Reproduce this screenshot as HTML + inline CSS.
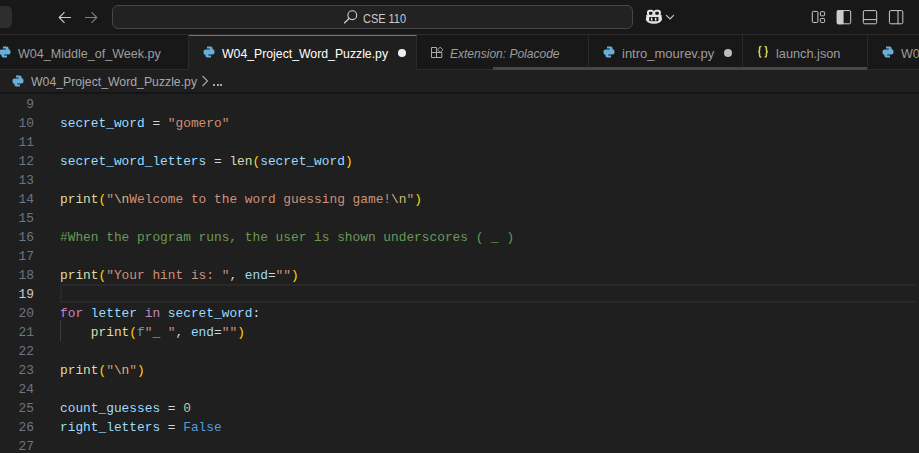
<!DOCTYPE html>
<html><head><meta charset="utf-8">
<style>
*{margin:0;padding:0;box-sizing:border-box}
html,body{width:919px;height:453px;overflow:hidden;background:#1f1f1f}
body{position:relative;font-family:"Liberation Sans",sans-serif;color:#ccc}
.abs{position:absolute}
#title{left:0;top:0;width:919px;height:35px;background:#181818;border-bottom:1px solid #2b2b2b}
#tabs{left:0;top:35px;width:919px;height:35px;background:#181818}
#crumbs{left:0;top:70px;width:919px;height:22px;background:#1f1f1f}
.tab{position:absolute;top:0;height:35px;background:#181818;border-right:1px solid #2b2b2b;border-bottom:1px solid #2b2b2b}
.tab.active{background:#1f1f1f;border-bottom:none}
.lbl{position:absolute;font-size:13px;line-height:16px;white-space:nowrap;color:#9d9d9d;transform-origin:0 0}
.tab.active .lbl{color:#ffffff}
.code{font-family:"Liberation Mono",monospace;font-size:12.83px;white-space:pre}
.ln{position:absolute;left:0;width:34px;text-align:right;color:#6e7681;height:19px;line-height:19px}
.cl{position:absolute;left:60px;height:19px;line-height:19px;color:#d4d4d4}
.v{color:#9cdcfe}.s{color:#ce9178}.f{color:#dcdcaa}.b{color:#ffd700}.k{color:#c586c0}.c{color:#6a9955}.n{color:#b5cea8}.t{color:#569cd6}.e{color:#d7ba7d}
</style></head><body>
<svg width="0" height="0" style="position:absolute">
 <defs>
  <g id="py" fill="#68aedb">
   <path d="M4 0.6h3.6a2 2 0 0 1 2 2v2.2a1.2 1.2 0 0 1-1.2 1.2H5.2a1.3 1.3 0 0 0-1.3 1.3v1.5H2.4A2 2 0 0 1 0.5 6.8V5.4A2 2 0 0 1 2.5 3.4h4.3V2.6H4z"/>
   <path d="M8 11.4H4.4a2 2 0 0 1-2-2V7.2a1.2 1.2 0 0 1 1.2-1.2h3.2a1.3 1.3 0 0 0 1.3-1.3V3.2h1.5a2 2 0 0 1 1.9 2v1.4a2 2 0 0 1-2 2H5.2v0.8H8z"/>
  </g>
 </defs>
</svg>
<div id="title" class="abs">
  <div class="abs" style="left:-6px;top:6px;width:18px;height:22px;border-radius:5px;background:#2e2e2e"></div>
  <svg class="abs" style="left:57px;top:10px" width="16" height="16" viewBox="0 0 16 16"><path d="M2.8 7.5h11.2M7.5 2.2L2.2 7.5l5.3 5.3" fill="none" stroke="#cccccc" stroke-width="1.1"/></svg>
  <svg class="abs" style="left:83px;top:10px" width="16" height="16" viewBox="0 0 16 16"><path d="M2 7.5h11.2M8.5 2.2l5.3 5.3-5.3 5.3" fill="none" stroke="#808080" stroke-width="1.1"/></svg>
  <div class="abs" style="left:112px;top:5px;width:521px;height:24px;border-radius:6px;border:1px solid #464646;background:#222222"></div>
  <svg class="abs" style="left:343px;top:9px" width="16" height="16" viewBox="0 0 16 16"><circle cx="9.3" cy="6.2" r="4.4" fill="none" stroke="#cccccc" stroke-width="1.1"/><path d="M6.2 9.3L1.2 14.3" stroke="#cccccc" stroke-width="1.3"/></svg>
  <div class="lbl" style="left:363px;top:11px;transform:scaleX(0.913);font-size:12px;color:#cccccc">CSE 110</div>
  <svg class="abs" style="left:644px;top:8px" width="20" height="18" viewBox="644 8 20 18"><ellipse cx="653.9" cy="19.3" rx="8" ry="4.5" fill="#e6e6e6"/><rect x="646.2" y="15" width="15.4" height="4" fill="#e6e6e6"/><rect x="647.0" y="9.8" width="7.0" height="6.2" rx="2.8" fill="#e6e6e6"/><rect x="653.7" y="9.8" width="7.2" height="6.2" rx="2.8" fill="#e6e6e6"/><rect x="649.0" y="11.8" width="3.4" height="3.0" rx="0.8" fill="#181818"/><rect x="655.3" y="11.8" width="3.5" height="3.0" rx="0.8" fill="#181818"/><rect x="649.2" y="16.9" width="9.3" height="4.4" rx="0.8" fill="#181818"/><rect x="650.9" y="17.7" width="1.5" height="2.9" fill="#e6e6e6"/><rect x="654.9" y="17.7" width="1.5" height="2.9" fill="#e6e6e6"/></svg>
  <svg class="abs" style="left:665px;top:13px" width="10" height="8" viewBox="0 0 10 8"><path d="M1.2 2.2L5 6 8.8 2.2" fill="none" stroke="#cccccc" stroke-width="1.1"/></svg>
  <svg class="abs" style="left:811px;top:10px" width="16" height="14" viewBox="0 0 16 14"><rect x="1.3" y="1.4" width="5.6" height="11.1" rx="1.1" fill="none" stroke="#cccccc" stroke-width="1"/><rect x="9.4" y="1.7" width="4.2" height="4.1" rx="0.9" fill="none" stroke="#cccccc" stroke-width="1"/><rect x="9.4" y="8.5" width="4.2" height="4.0" rx="0.9" fill="none" stroke="#cccccc" stroke-width="1"/></svg>
  <svg class="abs" style="left:836px;top:10px" width="16" height="15" viewBox="0 0 16 15"><rect x="1.2" y="0.6" width="13.5" height="13.2" rx="1.4" fill="none" stroke="#cccccc" stroke-width="1"/><rect x="0.8" y="0.2" width="6.8" height="14" rx="1.2" fill="#cccccc"/></svg>
  <svg class="abs" style="left:862px;top:10px" width="16" height="15" viewBox="0 0 16 15"><rect x="1.3" y="0.6" width="13.4" height="13.2" rx="1.4" fill="none" stroke="#cccccc" stroke-width="1"/><path d="M1.3 9.6h13.4" stroke="#cccccc" stroke-width="1"/></svg>
  <svg class="abs" style="left:888px;top:10px" width="16" height="15" viewBox="0 0 16 15"><rect x="1.4" y="0.6" width="13.4" height="13.2" rx="1.4" fill="none" stroke="#cccccc" stroke-width="1"/><path d="M10 0.6v13.2" stroke="#cccccc" stroke-width="1"/></svg>
</div>
<div id="tabs" class="abs">
  <div class="tab" style="left:0;width:189px"><svg class="abs" style="left:-1px;top:11px" width="12" height="12" viewBox="0 0 12 12"><use href="#py"/></svg><div class="lbl" style="left:18px;top:11px;transform:scaleX(0.966);">W04_Middle_of_Week.py</div></div>
  <div class="tab active" style="left:189px;width:228px;border-top:1px solid #3a80c8"><svg class="abs" style="left:14px;top:10px" width="12" height="12" viewBox="0 0 12 12"><use href="#py"/></svg><div class="lbl" style="left:33px;top:10px;transform:scaleX(0.943);">W04_Project_Word_Puzzle.py</div>
    <div class="abs" style="left:209px;top:13px;width:8px;height:8px;border-radius:50%;background:#f0f0f0"></div></div>
  <div class="tab" style="left:417px;width:172px">
    <svg class="abs" style="left:13px;top:11px" width="14" height="13" viewBox="0 0 14 13"><path d="M1.5 1.5h5v5h-5zM1.5 6.5h5v5h-5zM6.5 6.5h5.3v5H6.5z" fill="none" stroke="#ababab" stroke-width="1"/><path d="M10.2 1.1l2.7 2.7-2.7 2.7-2.7-2.7z" fill="none" stroke="#ababab" stroke-width="1"/></svg>
    <div class="lbl" style="left:33px;top:11px;transform:scaleX(0.924);font-style:italic">Extension: Polacode</div></div>
  <div class="tab" style="left:589px;width:154px"><svg class="abs" style="left:14px;top:11px" width="12" height="12" viewBox="0 0 12 12"><use href="#py"/></svg><div class="lbl" style="left:33px;top:11px;transform:scaleX(1.0);">intro_mourev.py</div>
    <div class="abs" style="left:135px;top:14px;width:8px;height:8px;border-radius:50%;background:#bdbdbd"></div></div>
  <div class="tab" style="left:743px;width:125px">
    <svg class="abs" style="left:13px;top:10px" width="14" height="14" viewBox="0 0 14 14"><path d="M5.4 1.4H4.9c-.9 0-1.3.5-1.3 1.3v2.4c0 .8-.4 1.4-1.3 1.6.9.2 1.3.8 1.3 1.6v2.5c0 .8.4 1.3 1.3 1.3h.5" fill="none" stroke="#d0d45c" stroke-width="1.5"/><path d="M8.6 1.4h.5c.9 0 1.3.5 1.3 1.3v2.4c0 .8.4 1.4 1.3 1.6-.9.2-1.3.8-1.3 1.6v2.5c0 .8-.4 1.3-1.3 1.3h-.5" fill="none" stroke="#d0d45c" stroke-width="1.5"/></svg>
    <div class="lbl" style="left:33px;top:11px;transform:scaleX(0.98);">launch.json</div></div>
  <div class="tab" style="left:868px;width:100px"><svg class="abs" style="left:14px;top:11px" width="12" height="12" viewBox="0 0 12 12"><use href="#py"/></svg><div class="lbl" style="left:33px;top:11px;transform:scaleX(0.966);">W04_Project_Word_Puzzle.py</div></div>
  <div class="abs" style="left:493px;top:32px;width:374px;height:3px;background:#474747"></div>
</div>
<div id="crumbs" class="abs">
  <svg class="abs" style="left:12px;top:5px" width="12" height="12" viewBox="0 0 12 12"><use href="#py"/></svg>
  <div class="lbl" style="left:31px;top:4px;transform:scaleX(0.943);color:#a9a9a9">W04_Project_Word_Puzzle.py</div>
  <svg class="abs" style="left:201px;top:5px" width="8" height="12" viewBox="0 0 8 12"><path d="M1.5 1l5 5-5 5" fill="none" stroke="#a9a9a9" stroke-width="1.1"/></svg>
  <div class="abs" style="left:213.2px;top:14.3px;width:2px;height:2px;background:#a8a8a8"></div>
  <div class="abs" style="left:216.8px;top:14.3px;width:2px;height:2px;background:#a8a8a8"></div>
  <div class="abs" style="left:220.1px;top:14.3px;width:2px;height:2px;background:#a8a8a8"></div>
</div>
<div id="editor" class="abs code" style="left:0;top:92px;width:919px;height:361px">
  <div class="abs" style="left:0;top:0;width:919px;height:3px;background:linear-gradient(#111111,#1f1f1f)"></div>
<div class="abs" style="left:60px;top:192px;width:857px;height:19px;border:2px solid #282828;border-right:none"></div>
<div class="abs" style="left:60px;top:228px;width:1px;height:21px;background:#3c3c3c"></div>
<div class="ln" style="top:3px;color:#6e7681">9</div>
<div class="ln" style="top:22px;color:#6e7681">10</div>
<div class="cl" style="top:22px"><span class="v">secret_word</span> = <span class="s">"gomero"</span></div>
<div class="ln" style="top:41px;color:#6e7681">11</div>
<div class="ln" style="top:60px;color:#6e7681">12</div>
<div class="cl" style="top:60px"><span class="v">secret_word_letters</span> = <span class="f">len</span><span class="b">(</span><span class="v">secret_word</span><span class="b">)</span></div>
<div class="ln" style="top:79px;color:#6e7681">13</div>
<div class="ln" style="top:98px;color:#6e7681">14</div>
<div class="cl" style="top:98px"><span class="f">print</span><span class="b">(</span><span class="s">"</span><span class="e">\n</span><span class="s">Welcome to the word guessing game!</span><span class="e">\n</span><span class="s">"</span><span class="b">)</span></div>
<div class="ln" style="top:117px;color:#6e7681">15</div>
<div class="ln" style="top:136px;color:#6e7681">16</div>
<div class="cl" style="top:136px"><span class="c">#When the program runs, the user is shown underscores ( _ )</span></div>
<div class="ln" style="top:155px;color:#6e7681">17</div>
<div class="ln" style="top:174px;color:#6e7681">18</div>
<div class="cl" style="top:174px"><span class="f">print</span><span class="b">(</span><span class="s">"Your hint is: "</span>, <span class="v">end</span>=<span class="s">""</span><span class="b">)</span></div>
<div class="ln" style="top:193px;color:#cccccc">19</div>
<div class="ln" style="top:212px;color:#6e7681">20</div>
<div class="cl" style="top:212px"><span class="k">for</span> <span class="v">letter</span> <span class="k">in</span> <span class="v">secret_word</span>:</div>
<div class="ln" style="top:231px;color:#6e7681">21</div>
<div class="cl" style="top:231px">    <span class="f">print</span><span class="b">(</span><span class="t">f</span><span class="s">"_ "</span>, <span class="v">end</span>=<span class="s">""</span><span class="b">)</span></div>
<div class="ln" style="top:250px;color:#6e7681">22</div>
<div class="ln" style="top:269px;color:#6e7681">23</div>
<div class="cl" style="top:269px"><span class="f">print</span><span class="b">(</span><span class="s">"</span><span class="e">\n</span><span class="s">"</span><span class="b">)</span></div>
<div class="ln" style="top:288px;color:#6e7681">24</div>
<div class="ln" style="top:307px;color:#6e7681">25</div>
<div class="cl" style="top:307px"><span class="v">count_guesses</span> = <span class="n">0</span></div>
<div class="ln" style="top:326px;color:#6e7681">26</div>
<div class="cl" style="top:326px"><span class="v">right_letters</span> = <span class="t">False</span></div>
<div class="ln" style="top:345px;color:#6e7681">27</div>
</div>
</body></html>
